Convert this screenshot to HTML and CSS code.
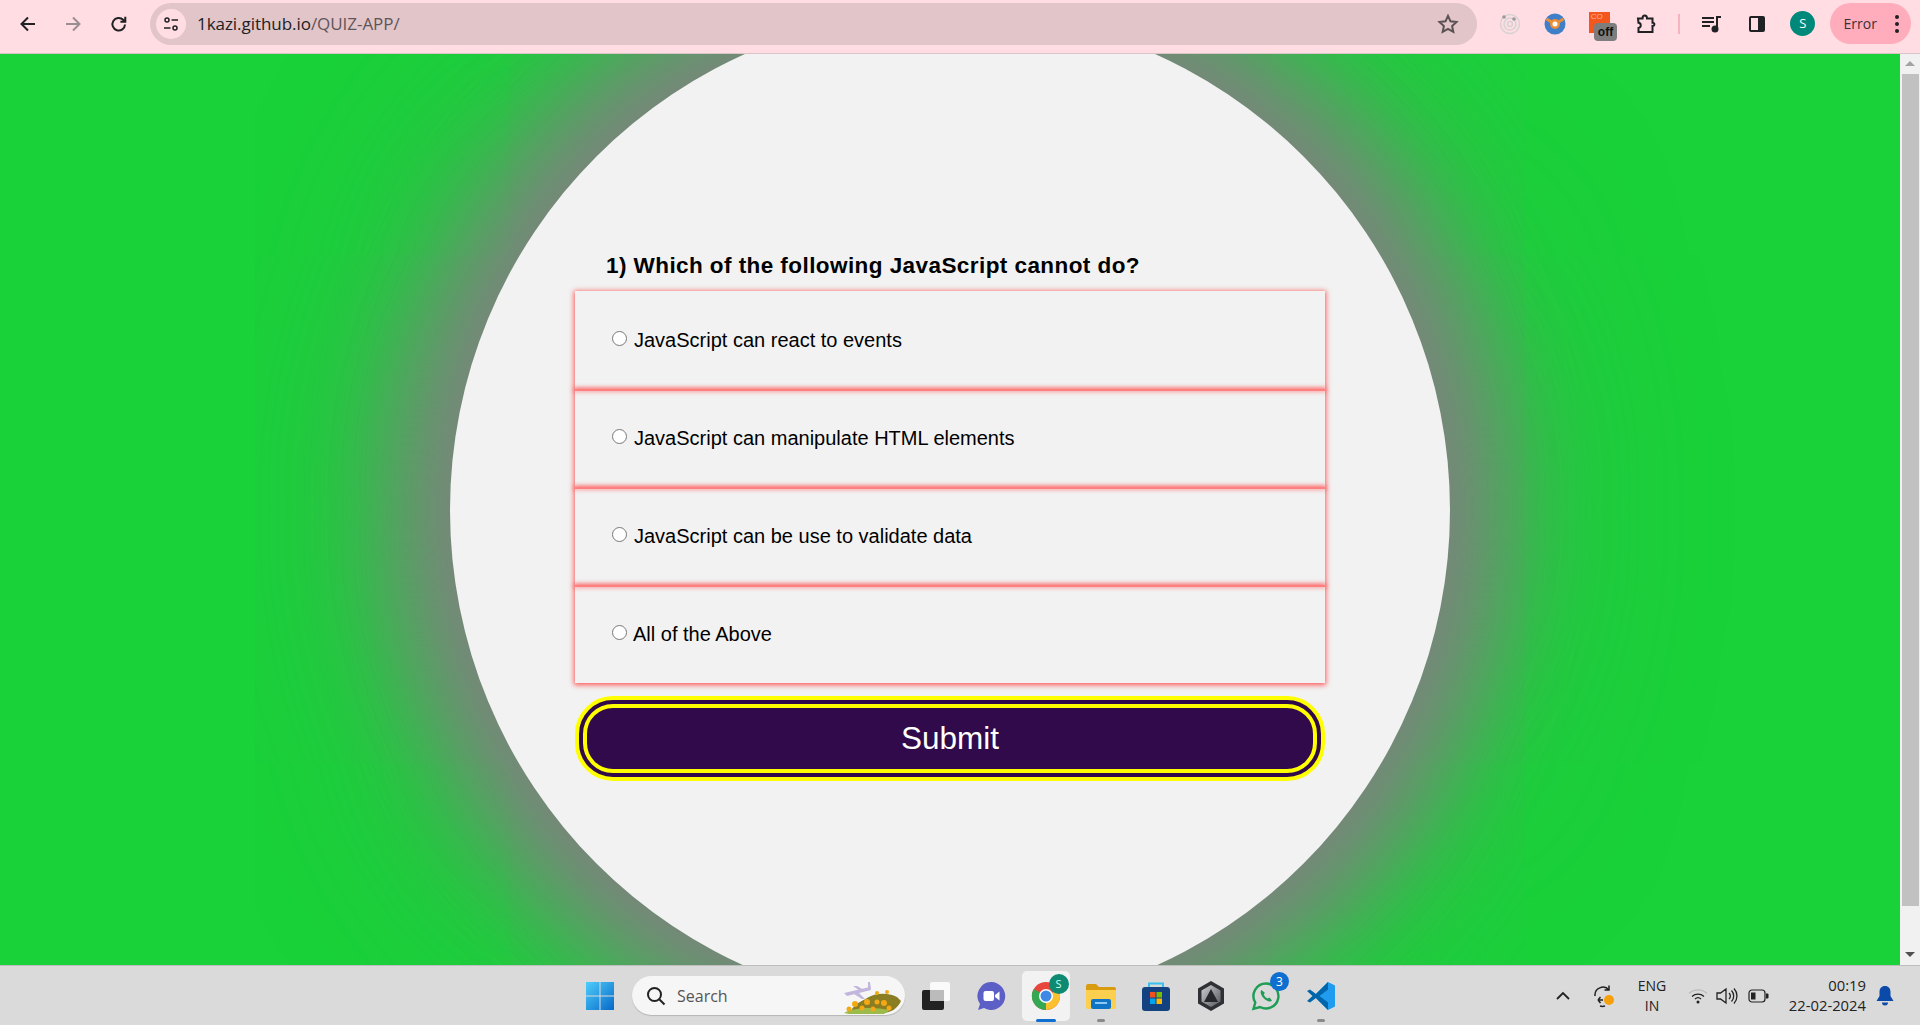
FILE: index.html
```html
<!DOCTYPE html>
<html lang="en">
<head>
<meta charset="utf-8">
<title>Quiz App</title>
<link rel="stylesheet" href="styles.css">
</head>
<body>
<header class="toolbar">
  <span class="tool"><svg width="20" height="20" viewBox="0 0 20 20" class="ink"><path d="M17 10H4M10 3.500 3.500 10l6.500 6.500"/></svg></span>
  <span class="tool"><svg width="20" height="20" viewBox="0 0 20 20" class="ink faded"><path d="M3 10h13M10 3.500l6.500 6.500-6.500 6.500"/></svg></span>
  <span class="tool"><svg width="20" height="20" viewBox="0 0 20 20" class="ink"><path d="M16 10.500a6.300 6.300 0 1 1-1.800-4.700L16 7.500M16.300 2.800v4.900h-4.900"/></svg></span>
  <div class="omnibox">
    <span class="chip"><svg width="18" height="18" viewBox="0 0 18 18" class="ink thin"><circle cx="5" cy="5" r="2"/><path d="M9.500 5H16M2 13h6.500"/><circle cx="13" cy="13" r="2"/></svg></span>
    <span class="url"><span class="host">1kazi.github.io</span>/QUIZ-APP/</span>
    <svg class="star" width="22" height="22" viewBox="0 0 22 22"><path d="M11 2.800l2.500 5.500 6 .7-4.400 4 1.200 5.900-5.300-3-5.300 3 1.200-5.900-4.400-4 6-.7z"/></svg>
  </div>
  <div class="exts">
    <span class="tool"><svg width="22" height="22" viewBox="0 0 22 22" class="radar"><circle cx="11" cy="11" r="9.500"/><circle cx="11" cy="11" r="6"/><circle cx="11" cy="11" r="2.500"/><circle cx="5" cy="4" r="1.800" class="dot"/><circle cx="15" cy="6" r="1.800" class="dot"/></svg></span>
    <span class="tool"><svg width="22" height="22" viewBox="0 0 22 22"><circle cx="11" cy="11" r="10.500" fill="#3f7fc9"/><path d="M2.500 6 11 11l8.500-5" fill="none" stroke="#ee8d37" stroke-width="3"/><circle cx="11" cy="11" r="5" fill="#ee8d37"/><circle cx="11" cy="11" r="2.500" fill="#fff"/></svg></span>
    <span class="tool badge-host"><span class="cors">CO</span><span class="off">off</span></span>
    <span class="tool"><svg width="22" height="22" viewBox="0 0 22 22" class="ink"><path d="M3 5.500h4.500c0-4 4.500-4 4.500 0h5.500v4.200c2.500-.3 2.500 3.500 0 3.200v6H3.500v-4c3-.2 3-5 0-5.200z"/></svg></span>
  </div>
  <span class="divider"></span>
  <span class="tool"><svg width="22" height="22" viewBox="0 0 22 22"><path d="M1 4h12v2H1zM1 8h12v2H1zM1 12h8v2H1z" class="solid"/><circle cx="14" cy="16" r="3.500" class="solid"/><path d="M16 16V4h4" class="ink plain"/></svg></span>
  <span class="tool"><svg width="20" height="20" viewBox="0 0 20 20"><rect x="2" y="2" width="16" height="16" rx="2" class="solid"/><rect x="4" y="4" width="7" height="12" fill="#ffdde3"/></svg></span>
  <span class="tool"><span class="avatar">S</span></span>
  <div class="error-pill"><span>Error</span><svg width="4" height="18" viewBox="0 0 4 18"><circle cx="2" cy="2" r="2" class="solid"/><circle cx="2" cy="9" r="2" class="solid"/><circle cx="2" cy="16" r="2" class="solid"/></svg></div>
</header>

<div class="viewport">
  <main class="stage">
    <section class="circle">
      <form class="quiz">
        <h2 class="question">1) Which of the following JavaScript cannot do?</h2>
        <ul class="options">
          <li class="option"><label class="choice"><input type="radio" name="a"><span>JavaScript can react to events</span></label></li>
          <li class="option"><label class="choice"><input type="radio" name="a"><span>JavaScript can manipulate HTML elements</span></label></li>
          <li class="option"><label class="choice"><input type="radio" name="a"><span>JavaScript can be use to validate data</span></label></li>
          <li class="option"><label class="choice"><input type="radio" name="a"><span class="tight">All of the Above</span></label></li>
        </ul>
        <button type="button" class="submit">Submit</button>
      </form>
    </section>
  </main>
  <aside class="scrollbar">
    <span class="arrow up"></span>
    <span class="thumb"></span>
    <span class="arrow down"></span>
  </aside>
</div>

<footer class="taskbar">
  <span class="tb-icon win"><svg width="30" height="30" viewBox="0 0 30 30"><defs><linearGradient id="w" x1="0" y1="0" x2="1" y2="1"><stop offset="0" stop-color="#4fcdfb"/><stop offset="1" stop-color="#0669c9"/></linearGradient></defs><path d="M1 1h13.500v13.500H1zM15.500 1H29v13.500H15.500zM1 15.500h13.500V29H1zM15.500 15.500H29V29H15.500z" fill="url(#w)"/></svg></span>
  <div class="search">
    <svg width="22" height="22" viewBox="0 0 22 22" class="ink"><circle cx="9.500" cy="9.500" r="6.500"/><path d="m14.500 14.500 5 5"/></svg>
    <span class="search-text">Search</span>
    <svg class="search-art" width="62" height="36" viewBox="0 0 62 36"><path d="M3 15 29 9l1 3-24 6zM12 8l4 0 7 4-4 1zM13 16l5-1 6 6-3 0zM27 4l2 0 1 7-3 0z" fill="#c3b6dc"/><path d="M10 33c4-8 10-9 16-13 8-5 20-6 30-1l4 4c-3 7-10 12-18 12z" fill="#8b7d22"/><path d="M3 35c10-6 30-6 46-3l-6 4H8z" fill="#9dbb4a"/><g fill="#f3a814"><circle cx="8" cy="31" r="2.500"/><circle cx="14" cy="26" r="3"/><circle cx="21" cy="30" r="2.500"/><circle cx="26" cy="24" r="3"/><circle cx="32" cy="31" r="2.500"/><circle cx="36" cy="24" r="2.500"/><circle cx="43" cy="25" r="3"/><circle cx="48" cy="30" r="2.500"/><circle cx="36" cy="15" r="2"/><circle cx="46" cy="14" r="2"/></g></svg>
  </div>
  <span class="tb-icon"><svg width="30" height="30" viewBox="0 0 30 30"><rect x="9" y="1" width="20" height="19" rx="2" fill="#fafafa"/><rect x="1" y="9" width="22" height="20" rx="2" fill="#222"/><rect x="9" y="9" width="14" height="11" fill="#bbb"/></svg></span>
  <span class="tb-icon"><svg width="30" height="30" viewBox="0 0 30 30"><path d="M15 1a14 14 0 1 1-7 26l-6 2 2-6A14 14 0 0 1 15 1z" fill="#5c5fc6"/><rect x="7.500" y="10" width="10.500" height="10" rx="2" fill="#fff"/><path d="m19 14 4.500-3.500v9L19 16z" fill="#fff"/></svg></span>
  <span class="tb-icon active">
    <svg width="30" height="30" viewBox="0 0 30 30"><circle cx="15" cy="15" r="14" fill="#e8453c"/><path d="M15 15 27.500 8.500A14 14 0 0 1 15 29z" fill="#fbc02d"/><path d="M15 15 15 29A14 14 0 0 1 2.800 8z" fill="#34a853"/><circle cx="15" cy="15" r="7" fill="#fff"/><circle cx="15" cy="15" r="5.500" fill="#3f88e6"/></svg>
    <span class="profile-dot">S</span>
    <span class="running blue"></span>
  </span>
  <span class="tb-icon"><svg width="30" height="26" viewBox="0 0 30 26"><path d="M0 3a2 2 0 0 1 2-2h8l3 3h15a2 2 0 0 1 2 2v4H0z" fill="#d99b10"/><path d="M0 7h30v17a2 2 0 0 1-2 2H2a2 2 0 0 1-2-2z" fill="#fdcf4e"/><rect x="5" y="16" width="20" height="10" rx="2" fill="#0f73c6"/><rect x="9" y="19" width="12" height="2" fill="#8cc8f2"/></svg><span class="running"></span></span>
  <span class="tb-icon"><svg width="30" height="30" viewBox="0 0 30 30"><path d="M8 7V2.500h14V7" fill="none" stroke="#38c0ee" stroke-width="2"/><rect x="1" y="6" width="28" height="24" rx="3" fill="#14417f"/><rect x="9" y="11" width="5.500" height="5.500" fill="#f25022"/><rect x="15.500" y="11" width="5.500" height="5.500" fill="#7fba00"/><rect x="9" y="17.500" width="5.500" height="5.500" fill="#00a4ef"/><rect x="15.500" y="17.500" width="5.500" height="5.500" fill="#ffb900"/></svg></span>
  <span class="tb-icon"><svg width="28" height="30" viewBox="0 0 28 30"><defs><linearGradient id="d" x1="0" y1="0" x2="1" y2="1"><stop offset="0" stop-color="#d0d0d4"/><stop offset="1" stop-color="#55575c"/></linearGradient></defs><path d="M14 0l13 7.500v15L14 30 1 22.500v-15z" fill="#2e3036"/><path d="M14 4l9.500 5.500v11L14 26l-9.500-5.500v-11z" fill="url(#d)"/><path d="M14 8l7 13H7z" fill="#26282d"/></svg></span>
  <span class="tb-icon"><svg width="30" height="30" viewBox="0 0 30 30"><path d="M15 2.500a12.500 12.500 0 1 1-6 23.500l-6.500 1.800L4.300 21.500A12.500 12.500 0 0 1 15 2.500z" fill="none" stroke="#1f9d55" stroke-width="2.400"/><path d="M10.500 9c-2 2 0 6 2.500 8.500s6 4 8 2l-2.500-3-2 1c-1.500-.7-3-2.200-3.700-3.700l1-2z" fill="#1f9d55"/></svg><span class="count">3</span></span>
  <span class="tb-icon"><svg width="30" height="30" viewBox="0 0 30 30"><path d="M22 1 29 4.500v21L22 29 7.500 15z" fill="#1f9cf0"/><path d="M22 1 10 13 4 8.500 1 10l5.500 5L1 20l3 1.500 6-4.500 12 12v-7.500L13.500 15 22 8.500z" fill="#0065a9"/></svg><span class="running"></span></span>
  <div class="tray">
    <svg class="tray-chev" width="14" height="10" viewBox="0 0 14 10"><path d="M1 8l6-6 6 6"/></svg>
    <span class="tray-sync"><svg width="22" height="24" viewBox="0 0 22 24" class="ink thin"><path d="M1 12a8 8 0 0 1 14-6M15 1.500v4.500h-4.500M4 16h5M4 16l2.500 3M4 16l2.500-3M6 22a8 8 0 0 0 5 0"/><circle cx="15" cy="16" r="5" fill="#f59f0b" stroke="none"/></svg></span>
    <span class="lang"><span>ENG</span><span>IN</span></span>
    <svg class="tray-wifi" width="20" height="16" viewBox="0 0 20 16"><path d="M1 5.500a13 13 0 0 1 18 0" stroke="#bbb"/><path d="M4 8.500a9 9 0 0 1 12 0M7 11a4.500 4.500 0 0 1 6 0"/><circle cx="10" cy="14" r="1.500" fill="#222" stroke="none"/></svg>
    <svg class="tray-vol" width="22" height="18" viewBox="0 0 22 18"><path d="M1 6h3.500L10 2v14l-5.500-4H1zM13 6a4 4 0 0 1 0 6M15.500 3.500a8 8 0 0 1 0 11M18 1.500a11 11 0 0 1 0 15"/></svg>
    <svg class="tray-bat" width="21" height="14" viewBox="0 0 21 14"><rect x="1" y="1" width="16" height="12" rx="3" fill="none" stroke="#222" stroke-width="1.200"/><rect x="3" y="3.500" width="4.500" height="7" fill="#222"/><path d="M18 4.500h1.500a1 1 0 0 1 1 1v3a1 1 0 0 1-1 1H18z" fill="#222"/></svg>
    <span class="clock"><span>00:19</span><span>22-02-2024</span></span>
    <svg class="tray-bell" width="18" height="20" viewBox="0 0 18 20"><path d="M9 0c3.500 0 5.500 2.500 5.500 6v4l3 5H.5l3-5V6C3.500 2.500 5.500 0 9 0zM6 16.500h6a3 3 0 0 1-6 0z" fill="#0b4aa8"/></svg>
  </div>
</footer>
</body>
</html>
```

FILE: styles.css
```css
* { box-sizing: border-box; }
html, body { height: 100%; }
body {
  margin: 0;
  height: 1025px;
  display: flex;
  flex-direction: column;
  overflow: hidden;
  font-family: "Liberation Sans", Arial, sans-serif;
  color: #000;
  background: #19d139;
}

/* browser toolbar */
.toolbar {
  flex: 0 0 54px;
  display: flex;
  align-items: center;
  padding: 0 8px 6px 5px;
  background: #ffdde3;
  border-bottom: 1px solid #d9c4c8;
  font-family: "Open Sans", sans-serif;
}
.tool {
  flex: 0 0 45.5px;
  height: 36px;
  display: flex;
  align-items: center;
  justify-content: center;
  position: relative;
}
.ink { fill: none; stroke: #202124; stroke-width: 2; }
.ink.thin { stroke-width: 1.500; }
.ink.faded { stroke: #9a8d91; }
.ink.plain { stroke-width: 2; }
.solid { fill: #202124; }
.omnibox {
  flex: 0 0 1327px;
  height: 42px;
  margin-left: 8.500px;
  display: flex;
  align-items: center;
  padding: 0 18px 0 6px;
  border-radius: 21px;
  background: #e2c5c9;
}
.chip {
  width: 30px;
  height: 30px;
  border-radius: 50%;
  background: #ffdde3;
  display: flex;
  align-items: center;
  justify-content: center;
}
.url {
  flex: 1;
  margin-left: 11px;
  font-size: 17px;
  letter-spacing: -0.05px;
  color: #5f5558;
}
.host { color: #202124; }
.star { fill: none; stroke: #5a5154; stroke-width: 2; }
.exts { display: flex; margin-left: 10px; }
.radar circle { fill: none; stroke: #d6d3d4; stroke-width: 1.500; }
.radar .dot { fill: #9a9a9a; stroke: none; }
.badge-host { font-family: "Liberation Sans", sans-serif; }
.cors {
  width: 21px;
  height: 21px;
  background: #f4571d;
  color: #ffb08f;
  font-size: 8px;
  line-height: 8px;
  padding: 1px 2px;
  overflow: hidden;
  margin: -3px 3px 0 0;
}
.off {
  position: absolute;
  left: 16px;
  top: 17px;
  width: 23px;
  height: 18px;
  border-radius: 4px;
  background: #7d7d7d;
  color: #111;
  font-size: 12px;
  font-weight: 700;
  line-height: 18px;
  text-align: center;
}
.divider {
  flex: 0 0 2px;
  height: 20px;
  margin: 0 9px;
  background: #f6b4c0;
}
.avatar {
  width: 25px;
  height: 25px;
  border-radius: 50%;
  background: #00897b;
  color: #fff;
  font-size: 13px;
  line-height: 25px;
  text-align: center;
}
.error-pill {
  flex: 0 0 81px;
  height: 41px;
  margin-left: 4px;
  padding: 0 12px 0 14px;
  border-radius: 21px;
  background: #ffadbc;
  color: #3a3033;
  font-size: 14px;
  display: flex;
  align-items: center;
  justify-content: space-between;
}

/* page viewport */
.viewport {
  flex: 0 0 911px;
  display: flex;
  min-height: 0;
}
.stage {
  flex: 1;
  display: flex;
  align-items: center;
  justify-content: center;
  overflow: hidden;
  background: #19d139;
}
.circle {
  flex: 0 0 1000px;
  height: 1000px;
  border-radius: 50%;
  background: #f2f2f2;
  box-shadow: 0 0 100px 45px #808080, 0 0 200px 50px rgba(128, 128, 128, .6);
  display: flex;
  align-items: center;
  justify-content: center;
  padding-top: 14px;
}
.quiz { width: 750px; }
.question {
  margin: 0 0 11px 31px;
  font-size: 22.500px;
  line-height: 28px;
  letter-spacing: .43px;
  font-weight: 700;
}
.options { list-style: none; margin: 0; padding: 0; }
.option {
  height: 98px;
  display: flex;
  align-items: center;
  padding-left: 35px;
  background: #f2f2f2;
  box-shadow: 0 1px 5px 1px rgba(255, 50, 50, .8);
  position: relative;
}
.option:not(:last-child)::after {
  content: "";
  position: absolute;
  left: 0;
  right: 0;
  bottom: -2px;
  height: 2px;
  background: rgba(255, 100, 100, .8);
  box-shadow: 0 0 4px 1px rgba(255, 100, 100, .6);
  z-index: 1;
}
.choice {
  display: flex;
  align-items: center;
  font-size: 20px;
  line-height: 24px;
}
.choice input { margin: 0 7px 3px 2px; width: 15px; height: 15px; }
.tight { margin-left: -1px; }
.submit {
  display: block;
  width: 750px;
  height: 85px;
  margin-top: 13px;
  padding-bottom: 2px;
  border: 12px double #ff0;
  border-radius: 38px;
  background: #300a4a;
  color: #fff;
  font-family: inherit;
  font-size: 31.500px;
}

/* scrollbar */
.scrollbar {
  flex: 0 0 20px;
  display: flex;
  flex-direction: column;
  align-items: center;
  background: #f1f1f1;
}
.arrow { flex: 0 0 20px; width: 0; height: 0; position: relative; }
.arrow::after {
  content: "";
  position: absolute;
  left: -5px;
  top: 7px;
  border: 5px solid transparent;
  border-top: 0;
  border-bottom: 5px solid #a3a3a3;
}
.arrow.down::after { border-bottom: 0; border-top: 5px solid #505050; }
.thumb { flex: 1; width: 17px; margin-bottom: 39px; background: #c1c1c1; }

/* windows taskbar */
.taskbar {
  flex: 0 0 60px;
  display: flex;
  align-items: center;
  padding-left: 572px;
  background: #dadada;
  border-top: 1px solid #bdbdbd;
  font-family: "Open Sans", sans-serif;
  color: #222;
}
.tb-icon {
  flex: 0 0 55px;
  height: 50px;
  display: flex;
  align-items: center;
  justify-content: center;
  position: relative;
}
.tb-icon.active { background: #f2f2f2; border-radius: 5px; flex-basis: 48px; margin: 0 3.500px; }
.search {
  flex: 0 0 273px;
  height: 39px;
  margin: 0 3px 0 5px;
  padding: 0 2px 0 13px;
  display: flex;
  align-items: center;
  border-radius: 20px;
  background: #f6f6f6;
  box-shadow: 0 1px 1px #b5b5b5;
}
.search-text { flex: 1; margin-left: 10px; font-size: 16px; color: #555; }
.profile-dot {
  position: absolute;
  right: 1px;
  top: 3px;
  width: 20px;
  height: 20px;
  border-radius: 50%;
  background: #0f8a72;
  color: #cfe;
  font-size: 11px;
  line-height: 20px;
  text-align: center;
}
.running {
  position: absolute;
  bottom: -1px;
  left: 50%;
  width: 8px;
  height: 3px;
  margin-left: -4px;
  border-radius: 2px;
  background: #8a8a8a;
}
.running.blue { width: 20px; margin-left: -10px; background: #0f6fd0; }
.count {
  position: absolute;
  right: 4px;
  top: 1px;
  width: 19px;
  height: 19px;
  border-radius: 50%;
  background: #0f6fd0;
  color: #fff;
  font-size: 12px;
  line-height: 19px;
  text-align: center;
}
.tray {
  flex: 1;
  display: flex;
  align-items: center;
  padding-left: 208px;
}
.tray svg { flex: none; }
.tray-chev { fill: none; stroke: #222; stroke-width: 1.800; margin-right: 24px; }
.tray-wifi, .tray-vol { fill: none; stroke: #222; stroke-width: 1.300; }
.lang {
  width: 48px;
  margin: 0 12px 0 12px;
  display: flex;
  flex-direction: column;
  align-items: center;
  font-size: 14px;
  line-height: 20px;
}
.tray-sync { display: flex; }
.tray-vol { margin: 0 10px 0 8px; }
.clock {
  width: 80px;
  margin: 0 10px 2px 17px;
  display: flex;
  flex-direction: column;
  align-items: flex-end;
  font-size: 14.800px;
  line-height: 20px;
  white-space: nowrap;
}
```
